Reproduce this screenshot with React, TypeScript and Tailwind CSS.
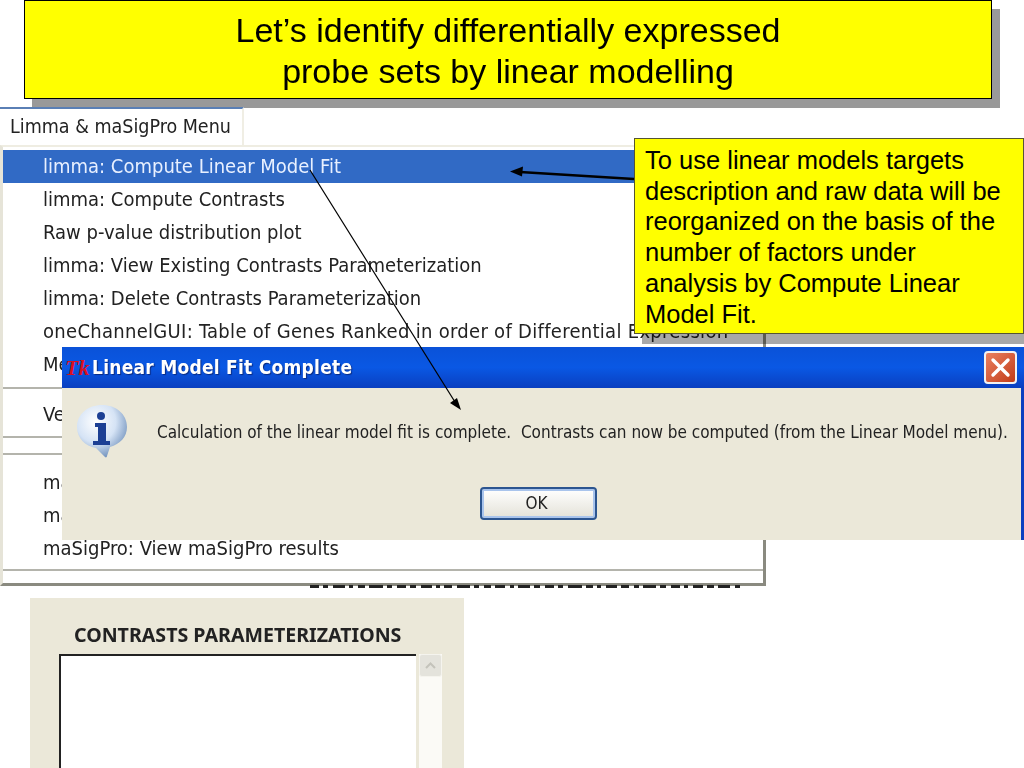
const menuFont = 'font-["DejaVu_Sans",sans-serif] [font-stretch:condensed]';

function MenuRow({ label, active, wide }: { label: string; active?: boolean; wide?: boolean }) {
  return (
    <div
      className={
        active
          ? 'flex h-[33px] items-center bg-[#316ac5] pb-[2px] pl-[40px] text-[#e8f0ff]'
          : 'flex h-[33px] items-center pb-[2px] pl-[40px] text-[#222222]'
      }
    >
      <span className={wide ? 'whitespace-nowrap tracking-[0.3px] blur-[0.4px]' : 'whitespace-nowrap blur-[0.4px]'}>
        {label}
      </span>
    </div>
  );
}

function InfoIcon() {
  return (
    <svg className="shrink-0" width="52" height="54" viewBox="0 0 52 54">
      <defs>
        <radialGradient id="bubble" cx="38%" cy="32%" r="72%">
          <stop offset="0%" stopColor="#ffffff" />
          <stop offset="55%" stopColor="#d5e3f5" />
          <stop offset="100%" stopColor="#6f90bb" />
        </radialGradient>
      </defs>
      <path
        d="M26 1C12 1 1 10 1 23c0 11 8 19 19 21l9 9c1 1 2 0 2-1l3-9c10-3 17-10 17-20C51 10 40 1 26 1z"
        fill="url(#bubble)"
      />
      <circle cx="25" cy="12" r="4" fill="#1c3f94" />
      <path d="M19 19h11v18h4v4H17v-4h5V23h-3z" fill="#1c3f94" />
    </svg>
  );
}

const underMenuMarks = [9, 5, 12, 4, 7, 14, 5, 9, 6, 11, 4, 8, 13, 5, 7, 10, 4, 12, 6, 9, 5, 14, 7, 4, 11, 8, 5, 13, 6, 9, 4, 10, 7, 12, 5];

export default function App() {
  return (
    <div className="relative h-[768px] w-[1024px] overflow-hidden bg-white">
      {/* title box */}
      <div className="absolute left-[24px] top-0 flex h-[99px] w-[968px] flex-col items-center justify-center border border-black bg-[#ffff00] pt-[2px] text-center font-['Liberation_Sans',sans-serif] text-[34px] leading-[41px] text-black shadow-[8px_9px_0_#999999]">
        <div>Let’s identify differentially expressed</div>
        <div>probe sets by linear modelling</div>
      </div>

      {/* menu window */}
      <div className={`absolute left-0 top-[107px] w-[766px] text-[20px] ${menuFont}`}>
        <div className="flex h-[38px] w-[244px] items-center border-t-2 border-r-2 border-t-[#5a7fb5] border-r-[#f0eee4] bg-white pl-[10px] text-[19.5px] text-[#222222]">
          <span className="whitespace-nowrap blur-[0.4px]">Limma &amp; maSigPro Menu</span>
        </div>
        <div className="h-[441px] border-t-2 border-r-[3px] border-b-[3px] border-l-[3px] border-t-[#efede2] border-r-[#8a8a80] border-b-[#8a8a80] border-l-[#e6e4d8] bg-white pt-[3px]">
          <MenuRow label="limma: Compute Linear Model Fit" active />
          <MenuRow label="limma: Compute Contrasts" />
          <MenuRow label="Raw p-value distribution plot" />
          <MenuRow label="limma: View Existing Contrasts Parameterization" />
          <MenuRow label="limma: Delete Contrasts Parameterization" />
          <MenuRow label="oneChannelGUI: Table of Genes Ranked in order of Differential Expression" wide />
          <MenuRow label="MeV" />
          <div className="mt-[6px] border-t-2 border-[#b4b4ac]" />
          <div className="mt-[9px]">
            <MenuRow label="Venn" />
          </div>
          <div className="mt-[5px] border-t-2 border-[#b4b4ac]" />
          <div className="mt-[15px] border-t-2 border-[#b4b4ac]" />
          <div className="mt-[11px]">
            <MenuRow label="maSigPro" />
            <MenuRow label="maSigPro" />
            <MenuRow label="maSigPro: View maSigPro results" />
          </div>
          <div className="mt-[4px] border-t-2 border-[#b4b4ac]" />
        </div>
      </div>

      {/* top of a heading that shows under the menu */}
      <div className="absolute left-[310px] top-[585px] flex h-[3px] w-[430px] justify-between overflow-hidden blur-[0.4px]">
        {underMenuMarks.map((w, i) => (
          <div key={i} className="bg-[#222222]" style={{ width: w }} />
        ))}
      </div>

      {/* shadow of the callout, the menu text stays visible through it */}
      <div className="absolute left-[642px] top-[334px] h-[10px] w-[382px] bg-[#a8a8a8] mix-blend-multiply" />

      {/* callout */}
      <div className="absolute left-[634px] top-[138px] h-[196px] w-[390px] border border-[#555533] bg-[#ffff00] pl-[10px] pt-[6px] font-['Liberation_Sans',sans-serif] text-[25.5px] leading-[30.7px] text-black">
        <div>To use linear models targets</div>
        <div>description and raw data will be</div>
        <div>reorganized on the basis of the</div>
        <div>number of factors under</div>
        <div>analysis by Compute Linear</div>
        <div>Model Fit.</div>
      </div>

      {/* dialog */}
      <div className={`absolute left-[62px] top-[347px] flex h-[193px] w-[962px] flex-col bg-[#ebe8d9] ${menuFont}`}>
        <div className="flex h-[41px] items-center bg-gradient-to-b from-[#0a52d8] via-[#0a58e4] to-[#0a3fc0] pl-[3px] pr-[7px]">
          <span className="w-[27px] font-['Liberation_Serif',serif] text-[22px] font-bold italic leading-none text-[#d81020]">Tk</span>
          <span className="whitespace-nowrap text-[19px] font-bold tracking-[0.25px] text-white blur-[0.3px] [text-shadow:1px_1px_1px_#0a2a80]">
            Linear Model Fit Complete
          </span>
          <div className="ml-auto flex h-[33px] w-[33px] items-center justify-center rounded-[4px] border-2 border-[#f2f2f2] bg-gradient-to-br from-[#e9805f] to-[#c23a14]">
            <svg width="21" height="21" viewBox="0 0 21 21">
              <path d="M3 3l15 15M18 3L3 18" stroke="#ffffff" strokeWidth="3.4" strokeLinecap="round" />
            </svg>
          </div>
        </div>
        <div className="flex flex-1 flex-col border-r-[3px] border-[#0a3fc0]">
          <div className="flex items-start pl-[14px] pt-[16px]">
            <InfoIcon />
            <span className="ml-[29px] mt-[16px] whitespace-pre text-[17px] text-[#222222] blur-[0.4px]">
              Calculation of the linear model fit is complete.  Contrasts can now be computed (from the Linear Model menu).
            </span>
          </div>
          <div className="mt-[29px] ml-[418px] flex h-[33px] w-[117px] items-center justify-center rounded-[4px] border-2 border-[#2c5590] bg-gradient-to-b from-[#ffffff] to-[#e4e2d8] pr-[4px] text-[17px] text-[#222222] shadow-[inset_0_0_0_2px_#a9c4ec]">
            <span className="blur-[0.3px]">OK</span>
          </div>
        </div>
      </div>

      {/* contrasts panel */}
      <div className="absolute left-[30px] top-[598px] h-[170px] w-[434px] bg-[#ebe8d9] pl-[29px] pt-[25px] font-['Noto_Sans',sans-serif]">
        <div className="whitespace-nowrap pl-[15px] text-[19.6px] font-bold leading-[24px] text-[#222222] blur-[0.3px]">
          CONTRASTS PARAMETERIZATIONS
        </div>
        <div className="mt-[7px] flex h-[120px] items-start">
          <div className="h-full w-[357px] border-l-2 border-t-2 border-[#222222] bg-white" />
          <div className="ml-[3px] h-full w-[23px] bg-[#fbfaf6]">
            <div className="flex h-[23px] items-center justify-center rounded-[3px] border border-[#f5f4ee] bg-[#e4e3dc]">
              <svg width="13" height="9" viewBox="0 0 13 9">
                <path d="M2 7l4.5-4.5L11 7" fill="none" stroke="#c4c3bb" strokeWidth="2" />
              </svg>
            </div>
          </div>
        </div>
      </div>

      {/* arrows */}
      <svg className="absolute inset-0" width="1024" height="768" viewBox="0 0 1024 768">
        <path d="M634 179L520 172" stroke="#000000" strokeWidth="2.5" />
        <path d="M510 171.5l13-5-1 10z" fill="#000000" />
        <path d="M310 170L455 402" stroke="#000000" strokeWidth="1.2" />
        <path d="M461 410l-11-7 7-5z" fill="#000000" />
      </svg>
    </div>
  );
}
